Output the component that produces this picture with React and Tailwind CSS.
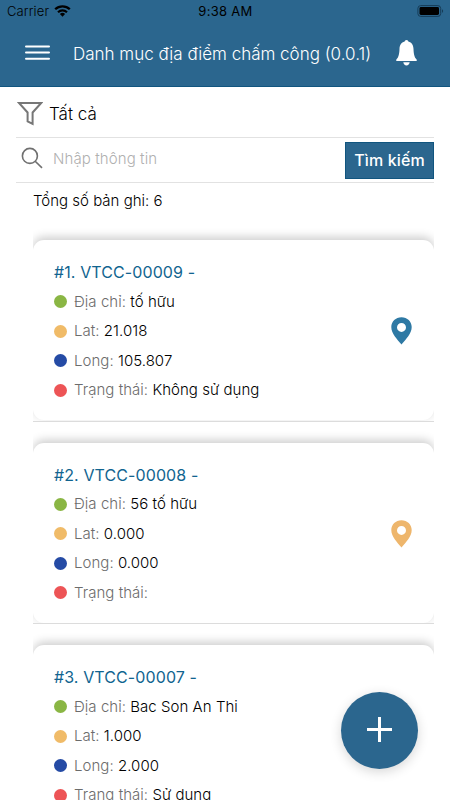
const places = [
  {
    code: 'VTCC-00009',
    pin: 'text-[#2e79a4]',
    rows: [
      { label: 'Địa chỉ', value: 'tố hữu', dot: 'bg-[#8ab644]' },
      { label: 'Lat', value: '21.018', dot: 'bg-[#f0bb68]' },
      { label: 'Long', value: '105.807', dot: 'bg-[#254ba5]' },
      { label: 'Trạng thái', value: 'Không sử dụng', dot: 'bg-[#ed5456]' },
    ],
  },
  {
    code: 'VTCC-00008',
    pin: 'text-[#eeb66c]',
    rows: [
      { label: 'Địa chỉ', value: '56 tố hữu', dot: 'bg-[#8ab644]' },
      { label: 'Lat', value: '0.000', dot: 'bg-[#f0bb68]' },
      { label: 'Long', value: '0.000', dot: 'bg-[#254ba5]' },
      { label: 'Trạng thái', value: '', dot: 'bg-[#ed5456]' },
    ],
  },
  {
    code: 'VTCC-00007',
    rows: [
      { label: 'Địa chỉ', value: 'Bac Son An Thi', dot: 'bg-[#8ab644]' },
      { label: 'Lat', value: '1.000', dot: 'bg-[#f0bb68]' },
      { label: 'Long', value: '2.000', dot: 'bg-[#254ba5]' },
      { label: 'Trạng thái', value: 'Sử dụng', dot: 'bg-[#ed5456]' },
    ],
  },
];

function StatusBar() {
  return (
    <div className="grid h-[22px] grid-cols-3 items-center pl-[7px] pr-[6px] text-black">
      <div className="flex items-center gap-[5px]">
        <span className="text-[13px] font-light leading-[22px] tracking-[0.1px]">Carrier</span>
        <svg width="17" height="12" viewBox="0 0 17 12" fill="none" stroke="currentColor">
          <path d="M1.2 4.3a10.4 10.4 0 0 1 14.6 0" strokeWidth="2.3" />
          <path d="M4 7.2a6.4 6.4 0 0 1 9 0" strokeWidth="2.1" />
          <path d="M8.5 11.7 5.9 9.1a3.7 3.7 0 0 1 5.2 0z" fill="currentColor" stroke="none" />
        </svg>
      </div>
      <div className="text-center text-[13px] leading-[22px] tracking-[0.3px]">9:38 AM</div>
      <svg className="justify-self-end" width="27" height="12" viewBox="0 0 27 12">
        <rect x="0.9" y="0.6" width="22.8" height="10.8" rx="2.8" fill="none" stroke="#163c57" strokeWidth="1" />
        <rect x="2.5" y="2" width="19.5" height="8" rx="1.4" />
        <path d="M25 4.2c1.5.5 1.5 3.1 0 3.6z" fill="#163c57" />
      </svg>
    </div>
  );
}

function Header() {
  return (
    <header className="h-[87px] border-b border-[#11557f] bg-[#2b668e]">
      <StatusBar />
      <div className="flex h-[64px] items-center pl-[25px] pr-[33px] text-white">
        <svg className="mb-[4px] mr-[23px] shrink-0" width="25" height="17" viewBox="0 0 25 17" stroke="currentColor" strokeWidth="2" strokeLinecap="round">
          <path d="M1 2.500h23M1 8.600h23M1 14.700h23" />
        </svg>
        <h1 className="flex-1 whitespace-nowrap text-[17px] font-light leading-6">
          Danh mục địa điểm chấm công (0.0.1)
        </h1>
        <svg className="mb-[3px] shrink-0" width="21" height="26" viewBox="0 0 21 26" fill="currentColor">
          <path d="M10.500 0C9.300 0 8.800 .8 8.700 1.600C5.100 2.500 3.600 5.600 3.500 9c-.2 5.300-.9 8.200-3.100 10.500C-.1 20.100 0 21 .9 21h19.200c.9 0 1-.9.500-1.500C18.400 17.200 17.700 14.300 17.500 9c-.1-3.400-1.600-6.500-5.200-7.400C12.200.8 11.700 0 10.500 0z" />
          <path d="M7.300 22.300h6.400c-.2 1.900-1.500 3.200-3.200 3.200s-3-1.300-3.200-3.200z" />
        </svg>
      </div>
    </header>
  );
}

function Pin({ className }) {
  return (
    <svg className={className} width="21" height="28" viewBox="0 0 21 28" fill="currentColor">
      <path fillRule="evenodd" d="M10.500 .2C4.700 .2 .3 4.600 .3 10c0 6.500 5.700 12.200 10.200 17.600C15 22.200 20.700 16.500 20.700 10 20.700 4.600 16.300.2 10.500.2zm0 5.700a4.500 4.500 0 1 1 0 9 4.500 4.500 0 0 1 0-9z" />
    </svg>
  );
}

function PlaceCard({ index, place }) {
  return (
    <li className="h-[202.500px] overflow-hidden border-b border-[#dcdcdc] pt-[21px]">
      <div className="flex h-[180px] items-center justify-between rounded-[11px] bg-white pl-[21px] pr-[22px] pt-[2px] shadow-[0_-3px_10px_rgba(0,0,0,0.2)]">
        <div>
          <h2 className="text-[16px] leading-[30px] tracking-[0.1px] text-[#11648f]">
            #{index}. {place.code} -
          </h2>
          {place.rows.map(({ label, value, dot }) => (
            <div key={label} className="flex h-[29.500px] items-center whitespace-pre text-[15px] font-light tracking-[0.04px]">
              <span className={`mr-[7px] size-[13px] rounded-full ${dot}`} />
              <span className="text-[#6c6c6c]">{label}: </span>
              <span className="text-black">{value}</span>
            </div>
          ))}
        </div>
        {place.pin && <Pin className={place.pin} />}
      </div>
    </li>
  );
}

export default function App() {
  return (
    <div className="relative h-[800px] w-[450px] overflow-hidden bg-white font-['Inter',sans-serif]">
      <Header />
      <div className="ml-4 mr-4">
        <div className="flex h-[51px] items-center gap-[6px] border-b border-[#e2e2e2] pt-[3px]">
          <svg className="ml-[1px]" width="26" height="25" viewBox="0 0 26 25" fill="none" stroke="#777" strokeWidth="2">
            <path d="M2 1.900h22.200L15.600 11.500v11.400l-5-2.500v-8.900z" />
          </svg>
          <span className="text-[17px] font-light leading-6 text-black">Tất cả</span>
        </div>
        <div className="flex h-[45px] items-center border-b border-[#e2e2e2]">
          <svg className="mb-[4px] ml-[5px]" width="22" height="22" viewBox="0 0 22 22" fill="none" stroke="#707070" strokeWidth="1.600">
            <circle cx="8.900" cy="8.900" r="7.500" />
            <path d="m14.200 14.200 6.800 6.700" />
          </svg>
          <span className="ml-[10px] flex-1 pb-[1px] text-[15px] font-light tracking-[0.1px] text-[#b0b0b0]">Nhập thông tin</span>
          <button className="h-[37px] w-[89px] border border-[#11557f] bg-[#2b668e] text-[16px] font-medium tracking-[0.15px] text-white">
            Tìm kiếm
          </button>
        </div>
      </div>
      <main className="ml-[33px] mr-4">
        <p className="h-[36px] pt-[6px] text-[15px] font-light leading-6 text-black">Tổng số bản ghi: 6</p>
        <ul>
          {places.map((place, i) => (
            <PlaceCard key={place.code} index={i + 1} place={place} />
          ))}
        </ul>
      </main>
      <button className="absolute left-[341px] top-[692px] flex size-[77px] items-center justify-center rounded-full bg-[#2b668e] pb-[2px] text-white shadow-[0_3px_12px_rgba(0,0,0,0.16)]">
        <svg width="25" height="25" viewBox="0 0 25 25" stroke="currentColor" strokeWidth="3">
          <path d="M12.500 0v25M0 12.500h25" />
        </svg>
      </button>
    </div>
  );
}
